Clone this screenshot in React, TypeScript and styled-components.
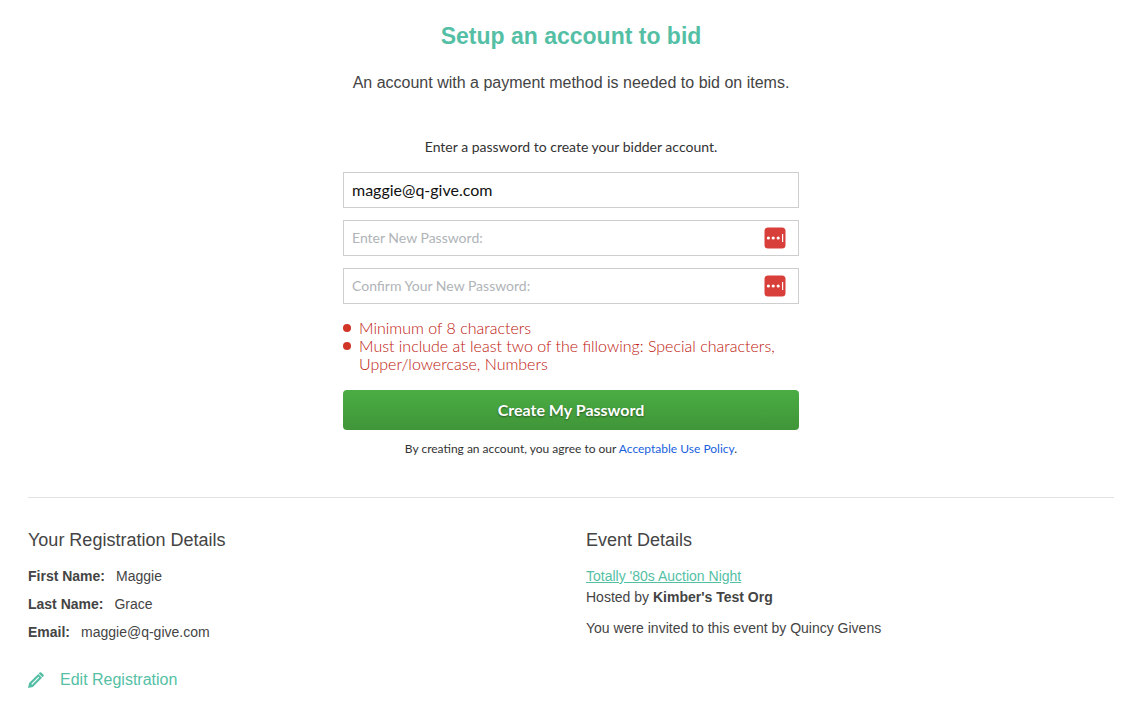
import React from 'react';
import styled, { createGlobalStyle } from 'styled-components';

const sans = '"Liberation Sans", Arial, Helvetica, sans-serif';
const rounded = 'Lato, "Open Sans", sans-serif';
const teal = '#55bfa5';

const GlobalStyle = createGlobalStyle`
  * { box-sizing: border-box; }
  body {
    margin: 0;
    background: #fff;
    color: #444;
    font-family: ${sans};
    font-size: 14px;
    line-height: 20px;
  }
`;

const Page = styled.main`
  padding: 20px 31px 36px 28px;
`;

const Intro = styled.header`
  text-align: center;
`;

const Title = styled.h1`
  margin: 0;
  color: ${teal};
  font-size: 23px;
  line-height: 32px;
`;

const Subtitle = styled.p`
  margin: 21px 0 0;
  font-size: 16px;
`;

const AccountForm = styled.form`
  max-width: 456px;
  margin: 44px auto 0;
  color: #333;
  font-family: ${rounded};
`;

const Instruction = styled.p`
  margin: 0 0 15px;
  text-align: center;
`;

const Field = styled.label`
  display: flex;
  align-items: center;
  height: 36px;
  margin-bottom: 12px;
  padding: 0 12px 0 8px;
  border: 1px solid #ccced0;
  background: #fff;
`;

const TextInput = styled.input<{ $size?: number }>`
  flex: 1;
  min-width: 0;
  height: 100%;
  padding: 0 0 2px;
  border: 0;
  outline: 0;
  background: transparent;
  color: #111;
  font-family: ${rounded};
  font-size: ${({ $size = 14 }) => $size}px;

  &::placeholder {
    color: #b0b4b8;
    opacity: 1;
  }
`;

const Rules = styled.ul`
  margin: 15px 0 17px;
  padding: 0;
  list-style: none;
  color: #bd150c;
  font-size: 16px;
  font-weight: 300;
  line-height: 18px;
`;

const Rule = styled.li`
  display: flex;
  gap: 8px;

  &::before {
    content: '';
    flex: none;
    width: 8px;
    height: 8px;
    margin-top: 5px;
    border-radius: 50%;
    background: #d13527;
  }
`;

const SubmitButton = styled.button`
  display: block;
  width: 100%;
  height: 40px;
  padding: 0 0 2px;
  border: 0;
  border-radius: 4px;
  background: linear-gradient(#4aad43, #409539);
  color: #fff;
  font-family: ${rounded};
  font-size: 16px;
  font-weight: 700;
  text-shadow: 0 1px 2px rgba(0, 0, 0, 0.45);
  cursor: pointer;
`;

const Terms = styled.p`
  margin: 10px 0 0;
  font-size: 12px;
  line-height: 18px;
  text-align: center;
`;

const PolicyLink = styled.a`
  color: #1a5fdc;
  text-decoration: none;
`;

const Details = styled.div`
  display: grid;
  grid-template-columns: 1fr 1fr;
  gap: 30px;
  margin-top: 39px;
  padding-top: 30px;
  border-top: 1px solid #e2e2e2;
`;

const SectionTitle = styled.h2`
  margin: 0 0 14px;
  font-size: 18px;
  font-weight: 400;
  line-height: 24px;
`;

const FactList = styled.dl`
  display: grid;
  gap: 8px;
  margin: 0;
`;

const Fact = styled.div`
  display: flex;
  gap: 11px;
`;

const FactName = styled.dt`
  font-weight: 700;
`;

const FactValue = styled.dd`
  margin: 0;
`;

const EditLink = styled.a`
  display: inline-flex;
  align-items: center;
  gap: 16px;
  margin-top: 28px;
  color: ${teal};
  font-size: 16px;
  text-decoration: none;
`;

const EventLink = styled.a`
  color: ${teal};
`;

const EventText = styled.p`
  margin: 0 0 11px;
  line-height: 20px;
`;

const HostText = styled(EventText)`
  margin-top: 1px;
`;

const PasswordBadge = () => (
  <svg width="22" height="22" viewBox="0 0 22 22" aria-hidden="true">
    <rect x="0.5" y="0.5" width="21" height="21" rx="3.5" fill="#d93f3a" />
    <circle cx="4.4" cy="11" r="1.6" fill="#fff" />
    <circle cx="9.2" cy="11" r="1.6" fill="#fff" />
    <circle cx="14.2" cy="11" r="1.6" fill="#fff" />
    <rect x="18" y="7" width="1.2" height="8" fill="#fff" />
  </svg>
);

const Pencil = () => (
  <svg width="16" height="16" viewBox="0 0 16 16" aria-hidden="true">
    <path
      fill={teal}
      fillRule="evenodd"
      d="M0 16 1.1 11.1 10.2 2 14 5.8 4.9 14.9ZM3.3 11.9 4.1 12.7 11.2 5.6 10.4 4.8Z"
    />
    <path fill={teal} d="M10.7 1.5 11.7 0.5Q12.5-0.2 13.3 0.5L15.5 2.7Q16.2 3.5 15.5 4.3L14.5 5.3Z" />
  </svg>
);

export default function App() {
  return (
    <>
      <GlobalStyle />
      <Page>
        <Intro>
          <Title>Setup an account to bid</Title>
          <Subtitle>An account with a payment method is needed to bid on items.</Subtitle>
        </Intro>

        <AccountForm onSubmit={(event) => event.preventDefault()}>
          <Instruction>Enter a password to create your bidder account.</Instruction>
          <Field>
            <TextInput type="email" aria-label="Email" defaultValue="maggie@q-give.com" $size={16} />
          </Field>
          <Field>
            <TextInput type="password" aria-label="Enter New Password" placeholder="Enter New Password:" />
            <PasswordBadge />
          </Field>
          <Field>
            <TextInput
              type="password"
              aria-label="Confirm Your New Password"
              placeholder="Confirm Your New Password:"
            />
            <PasswordBadge />
          </Field>
          <Rules>
            <Rule>Minimum of 8 characters</Rule>
            <Rule>Must include at least two of the fillowing: Special characters, Upper/lowercase, Numbers</Rule>
          </Rules>
          <SubmitButton type="submit">Create My Password</SubmitButton>
          <Terms>
            By creating an account, you agree to our <PolicyLink href="#policy">Acceptable Use Policy</PolicyLink>.
          </Terms>
        </AccountForm>

        <Details>
          <section>
            <SectionTitle>Your Registration Details</SectionTitle>
            <FactList>
              <Fact>
                <FactName>First Name:</FactName>
                <FactValue>Maggie</FactValue>
              </Fact>
              <Fact>
                <FactName>Last Name:</FactName>
                <FactValue>Grace</FactValue>
              </Fact>
              <Fact>
                <FactName>Email:</FactName>
                <FactValue>maggie@q-give.com</FactValue>
              </Fact>
            </FactList>
            <EditLink href="#edit">
              <Pencil />
              Edit Registration
            </EditLink>
          </section>
          <section>
            <SectionTitle>Event Details</SectionTitle>
            <EventLink href="#event">Totally '80s Auction Night</EventLink>
            <HostText>
              Hosted by <strong>Kimber's Test Org</strong>
            </HostText>
            <EventText>You were invited to this event by Quincy Givens</EventText>
          </section>
        </Details>
      </Page>
    </>
  );
}
